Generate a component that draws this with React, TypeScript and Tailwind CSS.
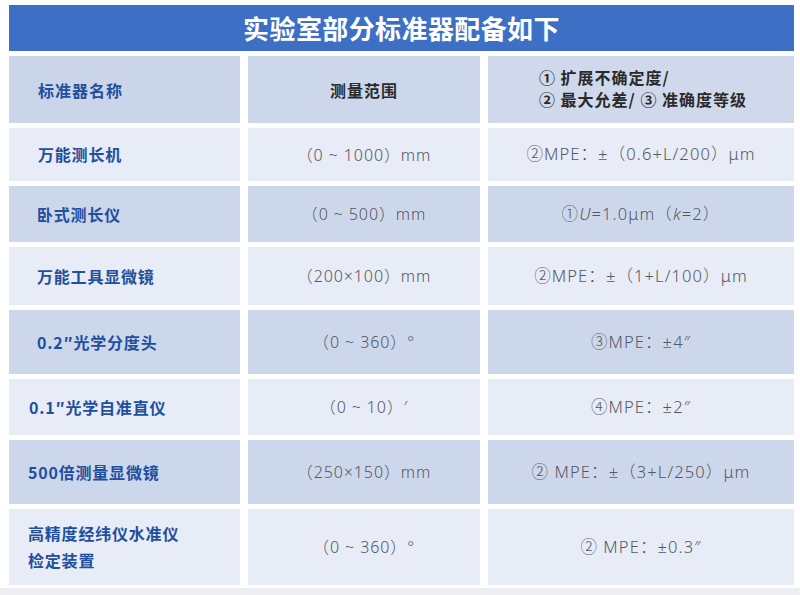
import React from 'react';

const ROWS = [
    { name: ['万能测长机'], range: '（0 ~ 1000）mm', value: <>②MPE：±（0.6+L/200）μm</>, h: 'h-[53px]', pl: 'pl-[29px]', dark: false },
    { name: ['卧式测长仪'], range: '（0 ~ 500）mm', value: <>①<i>U</i>=1.0μm（<i>k</i>=2）</>, h: 'h-[56px]', pl: 'pl-[28px]', dark: true },
    { name: ['万能工具显微镜'], range: '（200×100）mm', value: <>②MPE：±（1+L/100）μm</>, h: 'h-[58px]', pl: 'pl-[28px]', dark: false },
    { name: ['0.2″光学分度头'], range: '（0 ~ 360）°', value: <>③MPE：±4″</>, h: 'h-[64px]', pl: 'pl-[28px]', dark: true },
    { name: ['0.1″光学自准直仪'], range: '（0 ~ 10）′', value: <>④MPE：±2″</>, h: 'h-[56px]', pl: 'pl-[20px]', dark: false },
    { name: ['500倍测量显微镜'], range: '（250×150）mm', value: <>② MPE：±（3+L/250）μm</>, h: 'h-[64px]', pl: 'pl-[19px]', dark: true },
    { name: ['高精度经纬仪水准仪', '检定装置'], range: '（0 ~ 360）°', value: <>② MPE：±0.3″</>, h: 'h-[76px]', pl: 'pl-[19px]', dark: false },
];

const cjk = "font-['Noto_Sans_CJK_SC','Noto_Sans',sans-serif]";
const latin = "font-['Noto_Sans','Noto_Sans_CJK_SC',sans-serif]";

export default function App() {
    return (
        <div className={`w-[800px] h-[595px] bg-white flex flex-col ${cjk}`}>
            <div className="pl-[9px] pr-[6px] pt-[5px] flex flex-col gap-[5px]">
                {/* Title */}
                <div className="h-[46px] bg-[#3d70c5] flex items-center justify-center text-white text-[26px] font-bold tracking-[0.4px] leading-none">
                    实验室部分标准器配备如下
                </div>

                <div className="grid grid-cols-[231px_232px_306px] gap-x-[8px] gap-y-[5px]">
                    {/* Header row */}
                    <div className="h-[67px] bg-[#cbd5ea] flex items-center pl-[29px] text-[#1f4f9e] text-[16px] font-bold tracking-[1px]">
                        标准器名称
                    </div>
                    <div className="h-[67px] bg-[#cdd7eb] flex items-center justify-center text-[#2a2a2a] text-[16px] font-bold tracking-[1px]">
                        测量范围
                    </div>
                    <div className="h-[67px] bg-[#d0d9ec] flex items-center justify-center text-[#2a2a2a] text-[16px] font-bold leading-[22px] tracking-[1px]">
                        <div className="-mt-[3px] pl-[4px]">
                            <div>① 扩展不确定度/</div>
                            <div>② 最大允差/ ③ 准确度等级</div>
                        </div>
                    </div>

                    {ROWS.map((r, i) => {
                        const bg = r.dark ? 'bg-[#cdd7eb]' : 'bg-[#e7ecf6]';
                        return (
                            <React.Fragment key={i}>
                                <div className={`${r.h} ${bg} ${r.pl} flex flex-col justify-center text-[#1f4f9e] text-[16px] font-bold tracking-[0.8px] leading-[27px]`}>
                                    {r.name.map((n) => (
                                        <div key={n}>{n}</div>
                                    ))}
                                </div>
                                <div className={`${r.h} ${bg} ${latin} flex items-center justify-center text-[#54585f] text-[16px] font-light tracking-[0.9px] whitespace-pre`}>
                                    {r.range}
                                </div>
                                <div className={`${r.h} ${bg} ${latin} flex items-center justify-center text-[#54585f] text-[16.5px] font-light tracking-[1.1px] whitespace-pre`}>
                                    {r.value}
                                </div>
                            </React.Fragment>
                        );
                    })}
                </div>
            </div>
            <div className="flex-1 mt-[3px] bg-[#efeff3]" />
        </div>
    );
}
